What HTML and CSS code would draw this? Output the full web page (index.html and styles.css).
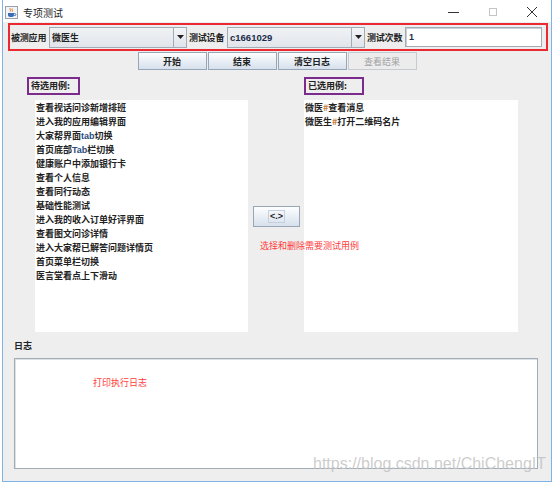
FILE: index.html
```html
<!DOCTYPE html>
<html lang="zh">
<head>
<meta charset="utf-8">
<title>专项测试</title>
<link rel="stylesheet" href="styles.css">
</head>
<body>
<div class="window">
  <div class="titlebar">
    <svg class="appicon" width="13" height="13" viewBox="0 0 13 13">
      <rect x="0.5" y="0.5" width="12" height="12" fill="#f3f4f6" stroke="#98a2ae"/>
      <path d="M5.2 2.2c-1 1 1 2 0 3.3M7.3 2.6c-1 1 1 2 0 3" stroke="#e0701e" stroke-width="1" fill="none"/>
      <path d="M3 7h6v2.3c0 1-1 1.7-2 1.7H5c-1 0-2-.7-2-1.7z" fill="#3a6db5"/>
      <path d="M9 7.6h.8a1 1 0 0 1 0 2H9" stroke="#3a6db5" stroke-width="0.9" fill="none"/>
    </svg>
    <span class="title">专项测试</span>
    <div class="controls">
      <div class="ctl"><svg width="12" height="12" viewBox="0 0 12 12"><path d="M0 6.5h11" stroke="#333" stroke-width="1"/></svg></div>
      <div class="ctl"><svg width="12" height="12" viewBox="0 0 12 12"><rect x="2.5" y="2.5" width="7" height="7" fill="none" stroke="#c4c4c4"/></svg></div>
      <div class="ctl"><svg width="12" height="12" viewBox="0 0 12 12"><path d="M1 1l10 10M11 1L1 11" stroke="#333" stroke-width="1"/></svg></div>
    </div>
  </div>

  <div class="toprow">
    <span class="lbl">被测应用</span>
    <div class="combo"><span class="val">微医生</span><span class="arrow"><svg width="7" height="4" viewBox="0 0 7 4"><path d="M0 0h7L3.5 4z" fill="#222"/></svg></span></div>
    <span class="lbl">测试设备</span>
    <div class="combo"><span class="val latin">c1661029</span><span class="arrow"><svg width="7" height="4" viewBox="0 0 7 4"><path d="M0 0h7L3.5 4z" fill="#222"/></svg></span></div>
    <span class="lbl">测试次数</span>
    <div class="field">1</div>
  </div>

  <div class="btnrow">
    <button class="btn">开始</button>
    <button class="btn">结束</button>
    <button class="btn">清空日志</button>
    <button class="btn disabled">查看结果</button>
  </div>

  <div class="middle">
    <div class="col-left">
      <div class="caption cap-left">待选用例:</div>
      <div class="list">
        <div>查看视话问诊新增排班</div>
        <div>进入我的应用编辑界面</div>
        <div>大家帮界面<span class="latin">tab</span>切换</div>
        <div>首页底部<span class="latin">Tab</span>栏切换</div>
        <div>健康账户中添加银行卡</div>
        <div>查看个人信息</div>
        <div>查看同行动态</div>
        <div>基础性能测试</div>
        <div>进入我的收入订单好评界面</div>
        <div>查看图文问诊详情</div>
        <div>进入大家帮已解答问题详情页</div>
        <div>首页菜单栏切换</div>
        <div>医言堂看点上下滑动</div>
      </div>
    </div>
    <div class="col-mid">
      <button class="movebtn"><span class="focus">&lt;.&gt;</span></button>
      <div class="hint">选择和删除需要测试用例</div>
    </div>
    <div class="col-right">
      <div class="caption cap-right">已选用例:</div>
      <div class="list">
        <div>微医<span class="hash">#</span>查看消息</div>
        <div>微医生<span class="hash">#</span>打开二维码名片</div>
      </div>
    </div>
  </div>

  <div class="loglabel">日志</div>
  <div class="logbox"><span class="loghint">打印执行日志</span></div>

  <div class="watermark">https://blog.csdn.net/ChiChengIT</div>
</div>
</body>
</html>
```

FILE: styles.css
```css
* {
  box-sizing: border-box;
  margin: 0;
  padding: 0;
}

html, body {
  width: 554px;
  height: 484px;
  background: #ffffff;
  overflow: hidden;
}

body {
  font-family: "Noto Sans CJK SC", "Liberation Sans", sans-serif;
  font-size: 9px;
  color: #222;
}

.window {
  margin-left: 2px;
  width: 550px;
  height: 482px;
  border: 1px solid #7fb2e5;
  border-top: none;
  background: #eeeeee;
  display: flex;
  flex-direction: column;
  position: relative;
}

.titlebar {
  height: 22px;
  background: #ffffff;
  display: flex;
  align-items: center;
}

.appicon {
  margin-left: 2px;
  margin-top: 2px;
}

.title {
  margin-left: 5px;
  font-size: 10px;
  color: #222;
  margin-top: 2px;
}

.controls {
  margin-left: auto;
  display: flex;
  height: 22px;
}

.ctl {
  width: 39px;
  display: flex;
  align-items: center;
  justify-content: center;
  margin-top: 2px;
}

/* top row */
.toprow {
  margin: 1px 0 0 5px;
  width: 540px;
  height: 28px;
  border: 2px solid #ea2a30;
  display: flex;
  align-items: center;
  gap: 2px;
  padding-left: 1px;
}

.lbl {
  width: 36px;
  font-weight: bold;
  white-space: nowrap;
  letter-spacing: -0.2px;
}

.combo {
  width: 138px;
  height: 21px;
  border: 1px solid #a2acb7;
  background: linear-gradient(#f0f2f5, #e1e5ea);
  display: flex;
}

.combo .val {
  flex: 1;
  padding-left: 2px;
  line-height: 19px;
  font-weight: bold;
}

.combo .arrow {
  width: 13px;
  border-left: 1px solid #a2acb7;
  background: linear-gradient(#f4f6f8, #dfe4ea);
  display: flex;
  align-items: center;
  justify-content: center;
}

.latin {
  font-family: "Liberation Sans", sans-serif;
  color: #2a4a80;
  font-weight: bold;
}

.val.latin {
  font-size: 9.5px;
  color: #1c2c4a;
}

.hash {
  color: #c07a3a;
}

.field {
  width: 137px;
  height: 20px;
  border: 1px solid #a3acb6;
  box-shadow: inset 1px 1px 0 #c9cfd6;
  background: #ffffff;
  padding-left: 3px;
  line-height: 18px;
  font-family: "Liberation Sans", sans-serif;
  font-weight: bold;
  color: #1c2c4a;
}

/* buttons */
.btnrow {
  margin-top: 1px;
  height: 18px;
  display: flex;
  justify-content: center;
  gap: 1px;
}

.btn {
  width: 69px;
  height: 18px;
  border: 1px solid #98a7b7;
  background: linear-gradient(#fdfeff, #d6e0ec);
  font-family: inherit;
  font-size: 9px;
  font-weight: bold;
  color: #222;
  display: flex;
  align-items: center;
  justify-content: center;
}

.btn.disabled {
  background: #ececec;
  border-color: #c6cbd1;
  color: #a2a2a2;
  font-weight: normal;
}

/* middle */
.middle {
  margin-top: 7px;
  height: 255px;
  display: flex;
  padding-left: 24px;
}

.col-left {
  width: 221px;
  display: flex;
  flex-direction: column;
}

.col-mid {
  width: 56px;
  display: flex;
  flex-direction: column;
  position: relative;
  z-index: 1;
}

.col-right {
  width: 214px;
  display: flex;
  flex-direction: column;
}

.caption {
  height: 18px;
  border: 2px solid #7b2b8b;
  font-weight: bold;
  padding-left: 2px;
  line-height: 14px;
  white-space: nowrap;
}

.cap-left {
  width: 53px;
}

.cap-right {
  width: 60px;
}

.list {
  background: #ffffff;
  margin-top: 5px;
  flex: 1;
  padding: 1px 0 0 1px;
  line-height: 14px;
  font-weight: bold;
  white-space: nowrap;
}

.col-left .list {
  margin-left: 8px;
  width: 213px;
}

.movebtn {
  margin: 129px 0 0 5px;
  width: 47px;
  height: 21px;
  border: 1px solid #98a7b7;
  background: linear-gradient(#fdfeff, #d6e0ec);
  display: flex;
  align-items: center;
  justify-content: center;
  font-family: "Liberation Sans", sans-serif;
  font-size: 9px;
  font-weight: bold;
  color: #222;
}

.movebtn .focus {
  border: 1px solid #c5d0dc;
  padding: 0 1px;
  line-height: 11px;
}

.hint {
  margin: 14px 0 0 12px;
  line-height: 10px;
  color: #ff3b3b;
  white-space: nowrap;
}

/* log */
.loglabel {
  margin-top: 8px;
  padding-left: 11px;
  height: 12px;
  line-height: 12px;
  font-weight: bold;
}

.logbox {
  margin: 6px 0 0 11px;
  width: 524px;
  height: 111px;
  border: 1px solid #a2acb7;
  box-shadow: inset 1px 1px 0 #dde2e7;
  background: #ffffff;
  padding: 19px 0 0 78px;
}

.loghint {
  display: block;
  line-height: 10px;
  color: #ff3b3b;
}

.watermark {
  position: absolute;
  left: 310px;
  top: 455px;
  font-family: "Liberation Sans", sans-serif;
  font-size: 16px;
  line-height: 18px;
  color: rgba(195, 195, 195, 0.85);
  white-space: nowrap;
}
```
